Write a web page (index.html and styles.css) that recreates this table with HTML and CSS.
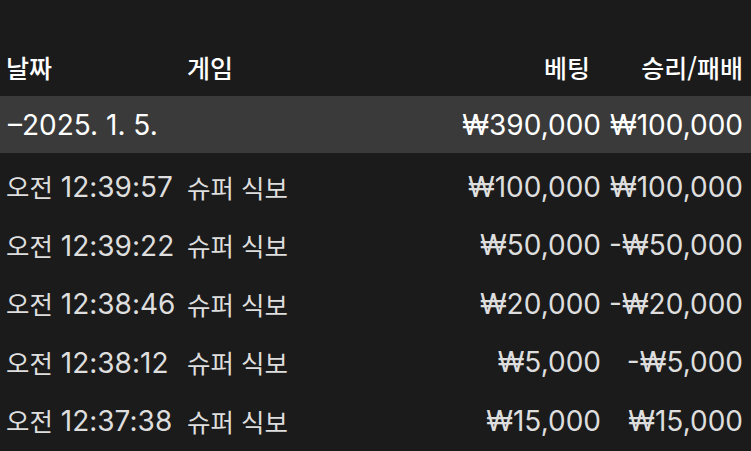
FILE: index.html
```html
<!DOCTYPE html>
<html lang="ko">
<head>
    <meta charset="UTF-8">
    <meta name="viewport" content="width=device-width, initial-scale=1.0">
    <title>베팅 기록</title>
    <link rel="stylesheet" href="styles.css">
</head>
<body>
    <div class="history">
        <div class="row head">
            <div class="cell">날짜</div>
            <div class="cell">게임</div>
            <div class="cell num bet-head">베팅</div>
            <div class="cell num">승리/패배</div>
        </div>

        <div class="row day">
            <div class="cell date">–2025. 1. 5.</div>
            <div class="cell"></div>
            <div class="cell num">₩390,000</div>
            <div class="cell num">₩100,000</div>
        </div>

        <div class="row">
            <div class="cell"><span class="ko">오전</span> 12:39:57</div>
            <div class="cell ko">슈퍼 식보</div>
            <div class="cell num">₩100,000</div>
            <div class="cell num">₩100,000</div>
        </div>
        <div class="row">
            <div class="cell"><span class="ko">오전</span> 12:39:22</div>
            <div class="cell ko">슈퍼 식보</div>
            <div class="cell num">₩50,000</div>
            <div class="cell num">-₩50,000</div>
        </div>
        <div class="row">
            <div class="cell"><span class="ko">오전</span> 12:38:46</div>
            <div class="cell ko">슈퍼 식보</div>
            <div class="cell num">₩20,000</div>
            <div class="cell num">-₩20,000</div>
        </div>
        <div class="row">
            <div class="cell"><span class="ko">오전</span> 12:38:12</div>
            <div class="cell ko">슈퍼 식보</div>
            <div class="cell num">₩5,000</div>
            <div class="cell num">-₩5,000</div>
        </div>
        <div class="row">
            <div class="cell"><span class="ko">오전</span> 12:37:38</div>
            <div class="cell ko">슈퍼 식보</div>
            <div class="cell num">₩15,000</div>
            <div class="cell num">₩15,000</div>
        </div>
    </div>
</body>
</html>
```

FILE: styles.css
```css
body {
    margin: 0;
    background-color: #1b1b1b;
    color: #dedede;
    font-family: Inter, "Noto Sans", "Noto Sans CJK KR", sans-serif;
    font-size: 28px;
    overflow: hidden;
}

.history {
    padding-top: 38px;
}

.row {
    display: grid;
    grid-template-columns: 181px 1fr 150px 142px;
    height: 58.6px;
    align-items: center;
    padding: 0 8px 0 6px;
    line-height: 58px;
    white-space: nowrap;
}

.row.head {
    color: #ffffff;
    height: 58px;
}

.row.head .cell {
    font-family: "Noto Sans CJK KR", sans-serif;
    font-size: 25px;
    font-weight: 500;
}

.row.day {
    background-color: #3a3a3a;
    color: #ffffff;
    height: 57px;
    margin-bottom: 4px;
}

.date {
    padding-left: 2px;
}

.num {
    text-align: right;
}

.bet-head {
    padding-right: 11px;
}

.ko {
    font-family: "Noto Sans CJK KR", sans-serif;
    font-size: 25.5px;
}
```
